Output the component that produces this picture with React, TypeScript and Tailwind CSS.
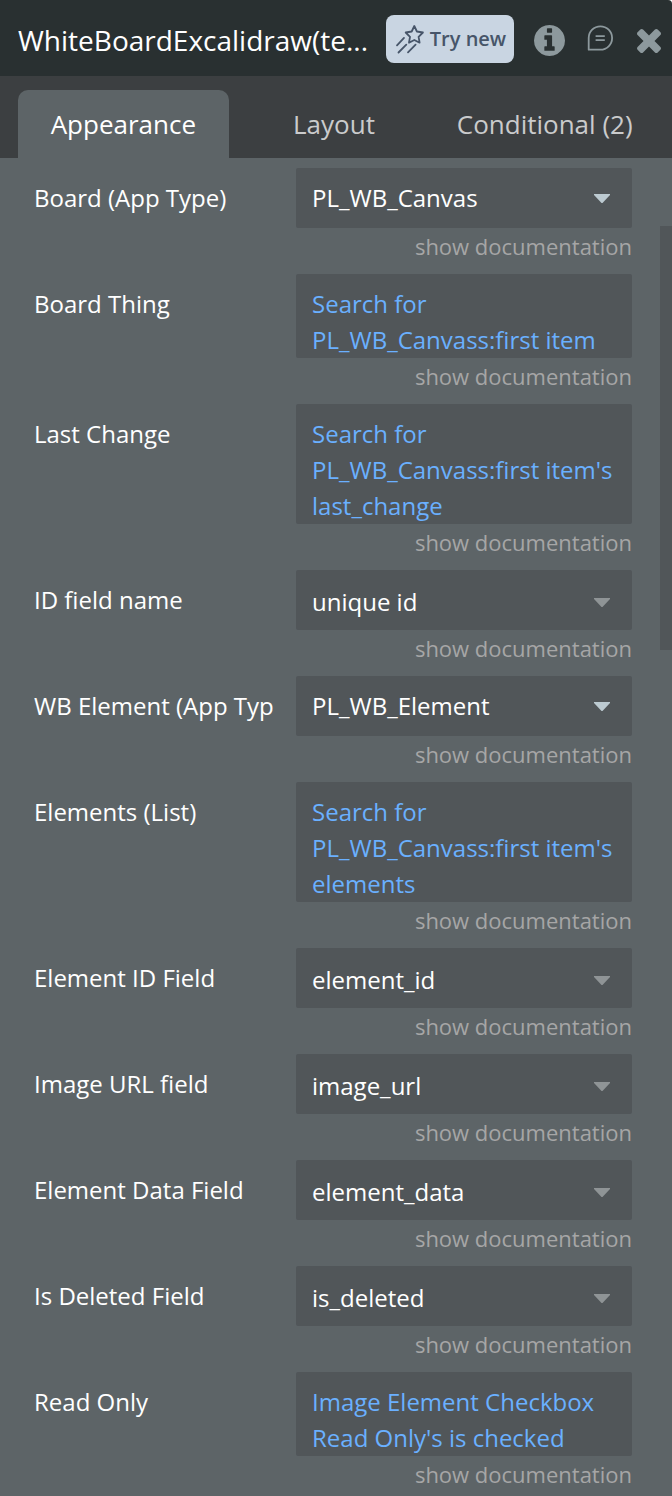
import { ReactNode, useState } from 'react';

type Field = {
    id: string;
    label: string;
    kind: 'type' | 'lookup' | 'expression';
    value: string;
};

const fields: Field[] = [
    { id: 'board', label: 'Board (App Type)', kind: 'type', value: 'PL_WB_Canvas' },
    {
        id: 'board_thing',
        label: 'Board Thing',
        kind: 'expression',
        value: 'Search for PL_WB_Canvass:first item',
    },
    {
        id: 'last_change',
        label: 'Last Change',
        kind: 'expression',
        value: "Search for PL_WB_Canvass:first item's last_change",
    },
    { id: 'id_field', label: 'ID field name', kind: 'lookup', value: 'unique id' },
    { id: 'wb_element', label: 'WB Element (App Typ', kind: 'type', value: 'PL_WB_Element' },
    {
        id: 'elements',
        label: 'Elements (List)',
        kind: 'expression',
        value: "Search for PL_WB_Canvass:first item's elements",
    },
    { id: 'element_id', label: 'Element ID Field', kind: 'lookup', value: 'element_id' },
    { id: 'image_url', label: 'Image URL field', kind: 'lookup', value: 'image_url' },
    { id: 'element_data', label: 'Element Data Field', kind: 'lookup', value: 'element_data' },
    { id: 'is_deleted', label: 'Is Deleted Field', kind: 'lookup', value: 'is_deleted' },
    {
        id: 'read_only',
        label: 'Read Only',
        kind: 'expression',
        value: "Image Element Checkbox Read Only's is checked",
    },
];

const tabs = ['Appearance', 'Layout', 'Conditional (2)'];

function ShootingStarIcon() {
    return (
        <svg
            viewBox="0 0 28 28"
            className="size-7 shrink-0 overflow-visible"
            fill="none"
            stroke="currentColor"
            strokeWidth="1.8"
            strokeLinecap="round"
            strokeLinejoin="round"
        >
            <path d="M18.3 1 20.9 6.5 26.9 7.5 22.6 11.8 23.6 17.7 18.3 15 13 17.7 14 11.8 9.7 7.5 15.7 6.5Z" />
            <path d="M8 12.9 1 20.3M10.3 19.7 2.5 27.5M19.6 19.7 12 27.3" />
        </svg>
    );
}

function InfoIcon() {
    return (
        <svg viewBox="128 128 1536 1536" className="size-[31px]" fill="currentColor">
            <path d="M1152 1376v-160q0-14-9-23t-23-9h-96v-512q0-14-9-23t-23-9h-320q-14 0-23 9t-9 23v160q0 14 9 23t23 9h96v320h-96q-14 0-23 9t-9 23v160q0 14 9 23t23 9h448q14 0 23-9t9-23zm-128-896v-160q0-14-9-23t-23-9h-192q-14 0-23 9t-9 23v160q0 14 9 23t23 9h192q14 0 23-9t9-23zm640 416q0 209-103 385.5t-279.5 279.5-385.5 103-385.5-103-279.5-279.5-103-385.5 103-385.5 279.5-279.5 385.5-103 385.5 103 279.5 279.5 103 385.5z" />
        </svg>
    );
}

function CommentIcon() {
    return (
        <svg
            viewBox="0 0 24 24"
            className="mb-1 size-6 overflow-visible"
            fill="none"
            stroke="currentColor"
            strokeWidth="1.8"
            strokeLinejoin="round"
        >
            <path d="M-.3 23.7V12A11.7 11.7 0 1 1 11.4 23.7Z" />
            <path d="M6.6 10.2h9.2M6.6 14.2h9.2" />
        </svg>
    );
}

function CloseIcon() {
    return (
        <svg viewBox="302 366 1188 1188" className="mt-0.5 size-6" fill="currentColor">
            <path d="M1490 1322q0 40-28 68l-136 136q-28 28-68 28t-68-28l-294-294-294 294q-28 28-68 28t-68-28l-136-136q-28-28-28-68t28-68l294-294-294-294q-28-28-28-68t28-68l136-136q28-28 68-28t68 28l294 294 294-294q28-28 68-28t68 28l136 136q28 28 28 68t-28 68l-294 294 294 294q28 28 28 68z" />
        </svg>
    );
}

function IconButton({ label, children }: { label: string; children: ReactNode }) {
    return (
        <button type="button" aria-label={label} className="shrink-0 text-[#8d999d]">
            {children}
        </button>
    );
}

function Select({ field }: { field: Field }) {
    const isType = field.kind === 'type';

    return (
        <div className="relative">
            <select
                id={field.id}
                className={`block h-[60px] w-full appearance-none rounded-xs bg-[#515659] px-4 text-2xl text-white outline-none ${
                    isType ? '' : 'pt-1'
                }`}
            >
                <option>{field.value}</option>
            </select>
            <svg
                viewBox="0 0 16 9"
                className={`pointer-events-none absolute right-[22px] h-[9px] w-4 ${
                    isType ? 'top-[26px] text-[#bccad1]' : 'top-7 text-[#8f9496]'
                }`}
                fill="currentColor"
            >
                <path d="M0 0H16V1L8.5 9H7.5L0 1Z" />
            </svg>
        </div>
    );
}

function FieldRow({ field }: { field: Field }) {
    return (
        <div className="flex">
            <label
                htmlFor={field.id}
                className="h-[60px] w-[262px] shrink-0 overflow-hidden text-2xl leading-[60px] whitespace-nowrap text-white"
            >
                {field.label}
            </label>
            <div className="min-w-0 flex-1">
                {field.kind === 'expression' ? (
                    <button
                        id={field.id}
                        type="button"
                        className="block w-full rounded-xs bg-[#515659] px-4 pt-3 text-left text-2xl leading-9 text-[#6ab0ff]"
                    >
                        {field.value}
                    </button>
                ) : (
                    <Select field={field} />
                )}
                <a
                    href="#"
                    className="mb-2.5 block text-right text-[22px] leading-9 text-[#a6a6a6]"
                >
                    show documentation
                </a>
            </div>
        </div>
    );
}

export default function App() {
    const [activeTab, setActiveTab] = useState(tabs[0]);

    return (
        <div className="flex h-screen flex-col bg-[#5d6467] font-['Open_Sans',sans-serif]">
            <div className="bg-white">
                <header className="flex h-[76px] items-center rounded-tr-sm bg-[#293031] pt-1 pr-[11px] pl-[18px]">
                    <h1 className="min-w-0 flex-1 truncate text-[28px] text-white">
                        WhiteBoardExcalidraw(te...
                    </h1>
                    <button
                        type="button"
                        className="mr-5 mb-0.5 flex h-12 w-32 shrink-0 items-center justify-center gap-1.5 rounded-lg bg-[#c9d5e2] pl-0.5 text-xl font-semibold text-[#475569]"
                    >
                        <ShootingStarIcon />
                        Try new
                    </button>
                    <div className="flex items-center gap-6">
                        <IconButton label="Info">
                            <InfoIcon />
                        </IconButton>
                        <IconButton label="Comments">
                            <CommentIcon />
                        </IconButton>
                        <IconButton label="Close">
                            <CloseIcon />
                        </IconButton>
                    </div>
                </header>
            </div>

            <nav className="flex bg-[#3c3f41] pt-3.5 pr-[22px] pl-[18px]">
                {tabs.map((tab) => (
                    <button
                        key={tab}
                        type="button"
                        onClick={() => setActiveTab(tab)}
                        className={`h-[68px] flex-1 rounded-t-[10px] text-[26px] whitespace-nowrap ${
                            tab === activeTab ? 'bg-[#5d6467] text-white' : 'text-[#cacbcc]'
                        }`}
                    >
                        {tab}
                    </button>
                ))}
            </nav>

            <main className="relative min-h-0 flex-1">
                <div className="h-full overflow-y-auto pt-2.5 pr-10 pl-[34px] [scrollbar-width:none]">
                    {fields.map((field) => (
                        <FieldRow key={field.id} field={field} />
                    ))}
                </div>
                <div className="absolute top-[68px] right-0 h-[424px] w-3 bg-[#515659]" />
            </main>
        </div>
    );
}
